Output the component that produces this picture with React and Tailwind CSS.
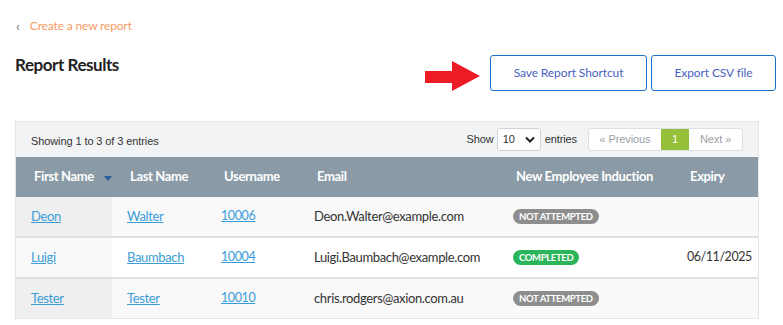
const rows = [
  { first: "Deon", last: "Walter", user: "10006", email: "Deon.Walter@example.com", status: "NOT ATTEMPTED", expiry: "" },
  { first: "Luigi", last: "Baumbach", user: "10004", email: "Luigi.Baumbach@example.com", status: "COMPLETED", expiry: "06/11/2025" },
  { first: "Tester", last: "Tester", user: "10010", email: "chris.rodgers@axion.com.au", status: "NOT ATTEMPTED", expiry: "" },
];

const cols = "grid grid-cols-[96px_94px_93px_199px_174px_86px]";

function Badge({ status }) {
  const done = status === "COMPLETED";
  return (
    <span
      className={`inline-block rounded-full px-[6px] h-[15px] leading-[15px] text-[9.5px] tracking-[-0.35px] font-bold text-white ${
        done ? "bg-[#2bb55a]" : "bg-[#8e8e8e]"
      }`}
    >
      {status}
    </span>
  );
}

function Arrow() {
  return (
    <svg width="55" height="30" viewBox="0 0 55 30" className="block">
      <polygon points="0,10 27,10 27,0 55,15 27,30 27,22 0,22" fill="#ed1c24" />
    </svg>
  );
}

export default function App() {
  return (
    <div className="w-[783px] h-[325px] bg-white overflow-hidden font-['Lato','Noto_Sans',sans-serif] text-[#333]">
      <div className="pl-[15px] pr-[7px] pt-[17px]">
        <div className="flex items-center h-[18px] text-[12px] tracking-[-0.15px]">
          <span className="text-[#6b7a90] text-[14px] leading-none ml-[1px] mr-[10px]">‹</span>
          <span className="text-[#f79a63]">Create a new report</span>
        </div>

        <div className="flex items-start justify-between mt-[20px]">
          <h1 className="text-[17px] font-bold text-[#222] leading-[24px] -mt-[2px] tracking-[-0.45px]">Report Results</h1>
          <div className="flex items-center gap-[4px]">
            <div className="mr-[6px] mt-[6px]">
              <Arrow />
            </div>
            <button className="w-[157px] h-[36px] border border-[#1a73c8] rounded-[3px] text-[12px] tracking-[-0.1px] text-[#4a5fc1] bg-white">
              Save Report Shortcut
            </button>
            <button className="w-[125px] h-[36px] border border-[#1a73c8] rounded-[3px] text-[12px] tracking-[-0.1px] text-[#4a5fc1] bg-white">
              Export CSV file
            </button>
          </div>
        </div>

        <div className="mt-[30px] w-[744px] border border-[#e4e6e9]">
          <div className="flex items-center justify-between h-[35px] bg-[#f2f3f5] px-[15px] font-['Liberation_Sans',Arial,sans-serif] text-[11px] tracking-[-0.1px] text-[#333]">
            <span className="mt-[4px]">Showing 1 to 3 of 3 entries</span>
            <div className="flex items-center">
              <span className="mr-[3px]">Show</span>
              <div className="flex items-center justify-between w-[44px] h-[23px] bg-white border border-[#cfd3d8] rounded-[3px] px-[5px]">
                <span>10</span>
                <svg width="10" height="7" viewBox="0 0 10 7">
                  <path d="M1 1.5 L5 5.5 L9 1.5" stroke="#222" strokeWidth="2" fill="none" />
                </svg>
              </div>
              <span className="ml-[4px]">entries</span>
              <div className="flex ml-[11px] h-[23px] border border-[#dcdfe3] rounded-[3px] bg-white">
                <span className="w-[72px] flex items-center justify-center text-[#9aa0a6]">« Previous</span>
                <span className="w-[28px] flex items-center justify-center bg-[#97c03a] text-white">1</span>
                <span className="w-[53px] flex items-center justify-center text-[#9aa0a6]">Next »</span>
              </div>
            </div>
          </div>

          <div className="text-[13px] tracking-[-0.35px]">
            <div className={`${cols} h-[40px] bg-[#8a9ba7] text-white font-bold items-center whitespace-nowrap`}>
              <div className="pl-[18px] flex items-center">
                First Name
                <svg width="8" height="5" viewBox="0 0 8 5" className="ml-[10px] mt-[2px]">
                  <polygon points="0,0 8,0 4,5" fill="#2a5f9e" />
                </svg>
              </div>
              <div className="pl-[18px]">Last Name</div>
              <div className="pl-[18px]">Username</div>
              <div className="pl-[18px]">Email</div>
              <div className="pl-[18px]">New Employee Induction</div>
              <div className="pl-[18px]">Expiry</div>
            </div>

            {rows.map((r, i) => {
              const odd = i % 2 === 0;
              return (
                <div
                  key={r.user}
                  className={`${cols} h-[39px] items-stretch whitespace-nowrap ${i > 0 ? "box-content border-t-2 border-[#e0e0e0]" : ""} ${
                    odd ? "bg-[#f9f9f9]" : "bg-white"
                  }`}
                >
                  <div className={`pl-[15px] flex items-center ${odd ? "bg-[#efefef]" : "bg-[#f9f9f9]"}`}>
                    <a className="text-[#3a9dd9] underline">{r.first}</a>
                  </div>
                  <div className="pl-[15px] flex items-center">
                    <a className="text-[#3a9dd9] underline">{r.last}</a>
                  </div>
                  <div className="pl-[15px] flex items-center">
                    <a className="text-[#3a9dd9] underline text-[12.5px] tracking-[-0.4px]">{r.user}</a>
                  </div>
                  <div className="pl-[15px] flex items-center">{r.email}</div>
                  <div className="pl-[15px] flex items-center">
                    <Badge status={r.status} />
                  </div>
                  <div className="pl-[15px] flex items-center text-[12.5px] tracking-[-0.45px]">{r.expiry}</div>
                </div>
              );
            })}
          </div>
        </div>
      </div>
    </div>
  );
}
